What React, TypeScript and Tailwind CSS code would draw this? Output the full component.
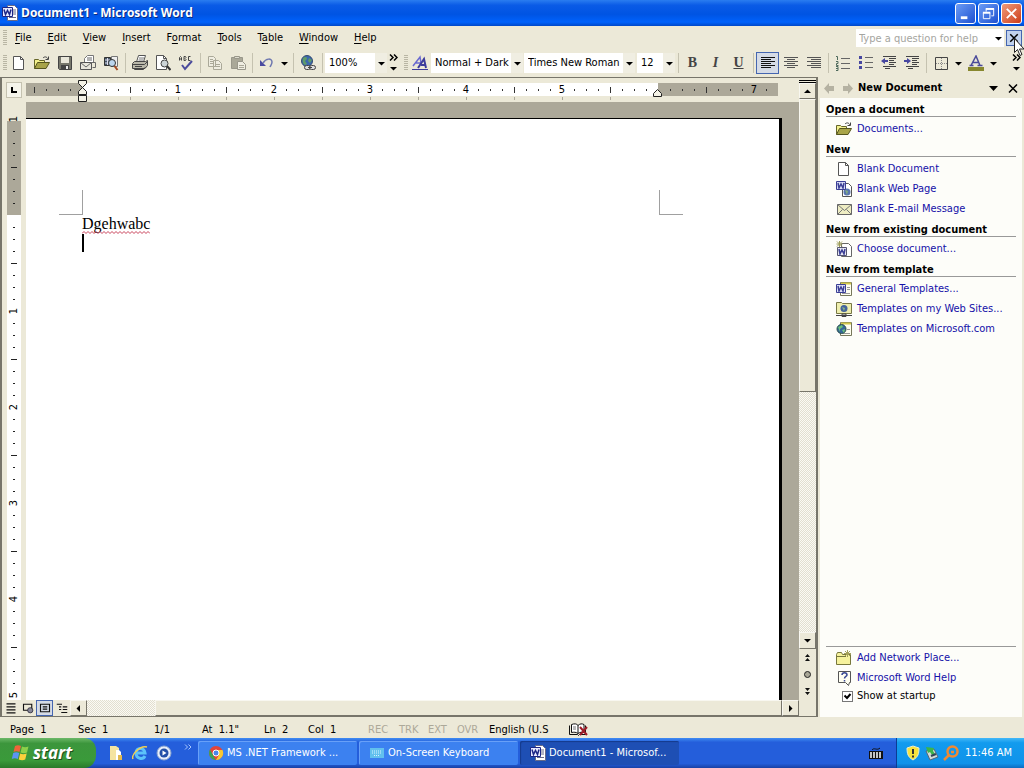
import type { ReactNode } from "react";

/* ================= DATA ================= */

const menus = [
  ["", "F", "ile"],
  ["", "E", "dit"],
  ["", "V", "iew"],
  ["", "I", "nsert"],
  ["F", "o", "rmat"],
  ["", "T", "ools"],
  ["T", "a", "ble"],
  ["", "W", "indow"],
  ["", "H", "elp"]
];

/* ================= ICONS ================= */

const Svg = ({ size = 16, children }: { size?: number; children: ReactNode }) => (
  <svg
    width={size}
    height={size}
    viewBox="0 0 16 16"
    fill="none"
    className="shrink-0"
    aria-hidden="true"
  >
    {children}
  </svg>
);

const SheetIcon = () => (
  <Svg>
    <path d="M2.500 1.500h7l3 3v10h-10z" fill="#fff" stroke="#555" />
    <path d="M9.500 1.500v3h3" stroke="#555" />
  </Svg>
);

const FolderIcon = () => (
  <Svg>
    <path d="M.500 13.500v-9h4l1 1h5v3" fill="#f3f08c" stroke="#66662a" />
    <path d="M.500 13.500l3-6h12l-3.500 6z" fill="#a8a448" stroke="#55551e" />
    <path d="M9 3c2-2 4-1 5 1M14.500 1.500V4.500H11.500" stroke="#444" />
  </Svg>
);

const SaveIcon = () => (
  <Svg>
    <path d="M1.500 1.500h13v13h-12l-1-1z" fill="#77776c" stroke="#444" />
    <path d="M4 2h8v6H4z" fill="#e9e7da" />
    <path d="M4 10h8v4H4z" fill="#444" />
    <path d="M9 11h2v3H9z" fill="#eee" />
  </Svg>
);

const MailIcon = () => (
  <Svg>
    <path d="M4.500 7V3.500l3-3h6v7" fill="#fff" stroke="#777" />
    <path d="M.500 7.500h11v7H.500z" fill="#e8e6dc" stroke="#555" />
    <path d="M.500 7.500L6 12l5.500-4.500M7 3h5M7 5h5M11.500 7.500h4v5h-3" stroke="#666" />
  </Svg>
);

const SearchIcon = () => (
  <Svg>
    <path d="M1.500 2.500h6v8h-6z" fill="#456" stroke="#333" />
    <path d="M2 5h5M2 8h5M4.500 3v7" stroke="#dde" />
    <path d="M8.500 1.500h6v10h-6z" fill="#eee" stroke="#777" />
    <circle cx="9" cy="8" r="3.500" fill="#bcd6ee" stroke="#333" />
    <path d="M11.500 11l3 4" stroke="#a34a22" strokeWidth="2" />
  </Svg>
);

const PrintIcon = () => (
  <Svg>
    <path d="M4.500 7l2-6.500h7l-2 6.500" fill="#fff" stroke="#555" />
    <path d="M7 3h5M6.500 5h5" stroke="#777" />
    <path d="M.500 8.500l2-2h11l2-1v5l-2.500 3H.500z" fill="#b9b7a9" stroke="#444" />
    <path d="M.500 9.500h12l3-3M3 11.500h7M2.500 13.500v1h9l2-2.500" stroke="#444" />
  </Svg>
);

const PreviewIcon = () => (
  <Svg>
    <path d="M1.500.500h7l3 3v11h-10z" fill="#fff" stroke="#555" />
    <path d="M8.500.500v3h3" stroke="#555" />
    <circle cx="9.500" cy="8.500" r="3.500" fill="#ccd4d6" stroke="#444" />
    <path d="M12 11l3.500 4" stroke="#333" strokeWidth="2" />
  </Svg>
);

const SpellIcon = () => (
  <Svg>
    <path
      d="M1.500 5.500V2.500l1-1 1 1v3M1.500 4h2M6 5.500v-4h1.500l.500 1-1 1 1 1-.500 1zM12.500 1.500h-2v4h2"
      stroke="#444"
    />
    <path d="M4 10l3 4 7-8" stroke="#4b4b9c" strokeWidth="2" />
  </Svg>
);

const CopyIcon = () => (
  <Svg>
    <path d="M1.500 1.500h5l2 2v8h-7zM6.500 5.500h5l3 3v6h-8z" fill="#efede1" stroke="#aaa898" />
    <path d="M3 4.500h3M3 6.500h3M3 8.500h3M8 9.500h5M8 11.500h5" stroke="#aaa898" />
  </Svg>
);

const PasteIcon = () => (
  <Svg>
    <path d="M1.500 2.500h11v11h-11z" fill="#aaa898" stroke="#99978a" />
    <path d="M4.500 1.500h5v2h-5z" fill="#dddbce" stroke="#99978a" />
    <path d="M7.500 6.500h5l3 3v5h-8z" fill="#efede1" stroke="#99978a" />
    <path d="M9 10.500h5M9 12.500h5" stroke="#aaa898" />
  </Svg>
);

const UndoIcon = () => (
  <Svg>
    <path d="M1 5v6h6z" fill="#4b4ba0" />
    <path d="M4 8c3-5 9-5 9-1 0 2-1 3-2 5" stroke="#6f78b0" strokeWidth="1.500" />
  </Svg>
);

const LinkIcon = () => (
  <Svg>
    <circle cx="7" cy="6" r="5.500" fill="#3b66ae" stroke="#344b6e" />
    <path d="M3 3c3-2 4-1 4 1L5 6l2 3-2 1C3 9 2 6 3 3zM9 3l3 2-2 3-2-2z" fill="#5f9c68" />
    <rect x="4.500" y="10.500" width="6" height="4" rx="2" fill="#ddd" stroke="#444" />
    <rect x="9.500" y="10.500" width="6" height="4" rx="2" fill="#ddd" stroke="#444" />
    <path d="M8 12.500h4" stroke="#444" />
  </Svg>
);

const StylesIcon = () => (
  <Svg>
    <path d="M1 11L8 2l1.500 9M4 8h5" stroke="#6a6ad0" strokeWidth="1.500" />
    <path d="M6 13l6-9 2 9M9 10h5" stroke="#3c3c9c" strokeWidth="2" />
    <path d="M0 14.500h16" stroke="#3c3c9c" />
  </Svg>
);

const lineSets: Record<string, string> = {
  left: "M1 2.500h14M1 4.500h10M1 6.500h14M1 8.500h10M1 10.500h14M1 12.500h10",
  center: "M1 2.500h14M4 4.500h8M1 6.500h14M4 8.500h8M1 10.500h14M4 12.500h8",
  right: "M1 2.500h14M5 4.500h10M1 6.500h14M5 8.500h10M1 10.500h14M5 12.500h10"
};

const AlignIcon = ({ kind, dark }: { kind: string; dark?: boolean }) => (
  <Svg>
    <path d={lineSets[kind]} stroke={dark ? "#111" : "#555"} />
  </Svg>
);

const NumberIcon = () => (
  <Svg>
    <path d="M6 3.500h9M6 8.500h9M6 13.500h9" stroke="#666" />
    <path
      d="M1 1.500h1.500V5M1 6.500h2v2H1.500v2H3.500M1 11.500h2v4H1M1 13.500h2"
      stroke="#4f6a5c"
    />
  </Svg>
);

const BulletIcon = () => (
  <Svg>
    <path d="M7 2.500h8M7 7.500h8M7 12.500h8" stroke="#666" />
    <path d="M1 1h3v3H1zM1 6h3v3H1zM1 11h3v3H1z" fill="#4747a0" />
  </Svg>
);

const IndentIcon = ({ out }: { out?: boolean }) => (
  <Svg>
    <path
      d="M2 1.500h13M8 3.500h7M8 5.500h5M8 7.500h7M8 9.500h5M2 11.500h13M4 13.500h5"
      stroke="#444"
    />
    {out ? (
      <path d="M0 6l4-3v2h3v2H4v2z" fill="#4747a0" />
    ) : (
      <path d="M7 6L3 3v2H0v2h3v2z" fill="#4747a0" />
    )}
  </Svg>
);

const BorderIcon = () => (
  <Svg>
    <path d="M2.500 2.500h12v12h-12z" stroke="#444" />
    <path d="M8.500 3v11M3 8.500h11" stroke="#888" strokeDasharray="1 1" />
  </Svg>
);

const FontColorIcon = () => (
  <Svg>
    <path
      d="M3 10.500L8 1l4 9.500M5 7.500h6M1.500 10.500h4M9.500 10.500h5"
      stroke="#4a4a9a"
      strokeWidth="1.500"
    />
    <path d="M0 12h16v4H0z" fill="#87872e" />
  </Svg>
);

const WordIcon = () => (
  <Svg>
    <path d="M5.500.500h7l3 3v12h-10z" fill="#fff" stroke="#666a88" />
    <path d="M11 5h3M11 7h3M11 9h3M7 12.500h7" stroke="#666a88" />
    <path d="M.500 2.500h10v9H.500z" fill="#e6e9ff" stroke="#1c2686" />
    <path d="M2 4.500l1.500 5 2-4 2 4 1.500-5" stroke="#1c2686" strokeWidth="1.500" />
  </Svg>
);

const WebPageIcon = () => (
  <Svg>
    <path d="M6.500 2.500h6l3 3v10h-9z" fill="#fff" stroke="#555" />
    <circle cx="11" cy="11" r="3.500" fill="#5874ae" />
    <path d="M9 9l3 1-1 4z" fill="#82ad80" />
    <path d="M.500.500h9v8H.500z" fill="#d8dcf5" stroke="#3b3f95" />
    <path d="M2 2l1 5 2-4 2 4 1-5" stroke="#3b3f95" strokeWidth="1.500" />
  </Svg>
);

const EnvelopeIcon = () => (
  <Svg>
    <path d="M1.500 3.500h14v10h-14z" fill="#eeedc2" stroke="#666" />
    <path d="M1.500 3.500l7 6 7-6M1.500 13.500l5-5M15.500 13.500l-5-5" stroke="#777" />
  </Svg>
);

const ChooseIcon = () => (
  <Svg>
    <path d="M5.500 2.500h7l3 3v10h-10z" fill="#fff" stroke="#666" />
    <path d="M1.500 6.500h9v8h-9z" fill="#e8e8f2" stroke="#555570" />
    <path d="M3 8l1 5 2-4 2 4 1-5" stroke="#3b3f95" strokeWidth="1.500" />
    <path d="M3.500 0v6M.500 3h6M1 .500l5 5M6 .500l-5 5" stroke="#9c9c58" />
  </Svg>
);

const TemplateIcon = () => (
  <Svg>
    <path d="M4.500 1.500h11v13h-11z" fill="#fffff0" stroke="#77775a" />
    <path d="M5 2.500h10" stroke="#d2c94c" strokeWidth="2" />
    <path d="M11 6.500h3M11 8.500h3M6 12.500h8" stroke="#999" />
    <path d="M.500 3.500h9v8H.500z" fill="#dfe2f8" stroke="#3b3f95" />
    <path d="M2 5l1 5 2-4 2 4 1-5" stroke="#3b3f95" strokeWidth="1.500" />
  </Svg>
);

const WebFolderIcon = () => (
  <Svg>
    <path d="M.500 12.500v-11h5l1 1h9v10z" fill="#eeeeae" stroke="#777744" />
    <circle cx="8" cy="7.500" r="3.500" fill="#43639c" />
    <path d="M6 6l3 1-1 3z" fill="#8bb884" />
    <path d="M0 14.500h16M6 13h4v2.500H6z" stroke="#444" />
  </Svg>
);

const GlobeSheetIcon = () => (
  <Svg>
    <path d="M4.500 1.500h11v13h-11z" fill="#fffff0" stroke="#77775a" />
    <path d="M5 2.500h10" stroke="#d2c94c" strokeWidth="2" />
    <path d="M11 8.500h3M7 12.500h7" stroke="#999" />
    <circle cx="5.500" cy="8" r="4.500" fill="#35679a" stroke="#2c5048" />
    <path d="M2 6l4-2 1 2-3 2v3zM6 9l3-1-1 4z" fill="#6cc278" />
  </Svg>
);

const NetworkIcon = () => (
  <Svg>
    <path d="M.500 14.500v-10l1-2h4l1 2h8v10z" fill="#f6f29c" stroke="#77773c" />
    <path d="M1 6.500h9" stroke="#77773c" />
    <path d="M11.500 0v7M8 3.500h7M9 1l5 5M14 1L9 6" stroke="#a5a15a" />
  </Svg>
);

const HelpIcon = () => (
  <Svg>
    <path d="M2.500 1.500h12v11h-1l-1 3-3-3h-7z" fill="#fffff2" stroke="#555" />
    <path
      d="M6 5c0-3 5-3 5 0 0 1.500-2.500 1.500-2.500 3.500M8.500 10v1.500"
      stroke="#3b4a95"
      strokeWidth="1.500"
    />
  </Svg>
);

const Arrow = ({ dir = "down" }: { dir?: string }) => (
  <svg width="7" height="7" viewBox="0 0 7 7" className="shrink-0" aria-hidden="true">
    {dir === "down" && <path d="M0 2h7L3.500 5.500z" fill="#000" />}
    {dir === "up" && <path d="M0 5h7L3.500 1.500z" fill="#000" />}
    {dir === "left" && <path d="M5 0v7L1.500 3.500z" fill="#000" />}
    {dir === "right" && <path d="M2 0v7l3.500-3.500z" fill="#000" />}
  </svg>
);

const FlagIcon = () => (
  <svg width="20" height="18" viewBox="0 0 20 18" className="shrink-0" aria-hidden="true">
    <path d="M4 2c2-1 4-1 6 0L8.500 8C6.500 7 4.500 7 2.500 8z" fill="#f0643a" />
    <path d="M11 2.500c2 1 4 1 6.500 0L16 8.500c-2 1-4 1-6.500 0z" fill="#8cd04a" />
    <path d="M2.200 9c2-1 4-1 6 0L6.800 15c-2-1-4-1-6 0z" fill="#5c94f2" />
    <path d="M9.200 9.500c2 1 4 1 6.500 0L14.200 15.500c-2 1-4 1-6.500 0z" fill="#fbd03c" />
  </svg>
);

/* ================= TOOLBAR PARTS ================= */

const Grip = () => (
  <span className="ml-[3px] h-4 w-1 shrink-0 bg-[repeating-linear-gradient(#b9b6a4_0_1px,transparent_1px_2px)]" />
);

const Sep = () => <span className="mx-[2px] h-5 w-[2px] shrink-0 border-r border-[#c5c2b0]" />;

const Tool = ({
  label,
  active,
  children
}: {
  label: string;
  active?: boolean;
  children: ReactNode;
}) => (
  <button
    type="button"
    aria-label={label}
    className={`flex h-[22px] w-[23px] shrink-0 items-center justify-center ${
      active ? "border border-[#4566b0] bg-[#d5dbe6]" : ""
    }`}
  >
    {children}
  </button>
);

const Drop = ({ label }: { label: string }) => (
  <button
    type="button"
    aria-label={label}
    className="flex h-[22px] w-3 shrink-0 items-center justify-center"
  >
    <Arrow />
  </button>
);

const More = () => (
  <button
    type="button"
    aria-label="Toolbar options"
    className="mr-[2px] flex h-[18px] w-3 shrink-0 flex-col items-center justify-between"
  >
    <svg width="9" height="7" viewBox="0 0 9 7" fill="none" aria-hidden="true">
      <path d="M1 .500l3 3-3 3M5 .500l3 3-3 3" stroke="#000" strokeWidth="1.500" />
    </svg>
    <Arrow />
  </button>
);

const Combo = ({ label, value, width }: { label: string; value: string; width: string }) => (
  <label className={`flex h-5 shrink-0 items-center bg-white ${width}`}>
    <span className="sr-only">{label}</span>
    <select className="h-5 min-w-0 flex-1 appearance-none bg-white pl-1 leading-5 outline-none">
      <option>{value}</option>
    </select>
    <span className="flex h-5 w-3 shrink-0 items-center justify-center bg-[#f0eee2]">
      <Arrow />
    </span>
  </label>
);

/* ================= TITLE, MENU, TOOLBAR ================= */

const captionButton =
  "flex size-[21px] items-center justify-center rounded-[3px] border border-white";

const TitleBar = () => (
  <header className="flex h-[26px] shrink-0 items-center bg-[linear-gradient(#2a7df0,#0a5be6_20%,#0054e3_55%,#0062fc_85%,#0048c8)] pr-[2px] pl-[2px]">
    <WordIcon />
    <h1 className="ml-[3px] flex-1 font-['Open_Sans','Noto_Sans',sans-serif] text-[12px] font-bold text-white [text-shadow:1px_1px_#0a2a80]">
      Document1 - Microsoft Word
    </h1>
    <div className="flex gap-[2px]">
      <button
        type="button"
        aria-label="Minimize"
        className={`${captionButton} bg-linear-to-br from-[#6c9cf5] to-[#1f4fd0]`}
      >
        <Svg size={15}>
          <path d="M3 11h7v3H3z" fill="#fff" />
        </Svg>
      </button>
      <button
        type="button"
        aria-label="Restore"
        className={`${captionButton} bg-linear-to-br from-[#6c9cf5] to-[#1f4fd0]`}
      >
        <Svg size={15}>
          <path d="M5.500 6V3.500h8v7H11" stroke="#fff" />
          <path d="M5 3h9M2 7h8" stroke="#fff" strokeWidth="2" />
          <path d="M2.500 7.500h7v6h-7z" stroke="#fff" />
        </Svg>
      </button>
      <button
        type="button"
        aria-label="Close"
        className={`${captionButton} bg-linear-to-br from-[#f09a78] to-[#cc3a10]`}
      >
        <Svg size={15}>
          <path d="M3 3l10 10M13 3L3 13" stroke="#fff" strokeWidth="2" />
        </Svg>
      </button>
    </div>
  </header>
);

const MenuBar = () => (
  <nav className="flex h-6 shrink-0 items-center">
    <Grip />
    {menus.map(([before, key, after]) => (
      <button type="button" key={before + key + after} className="px-2">
        {before}
        <span className="underline underline-offset-2">{key}</span>
        {after}
      </button>
    ))}
    <div className="ml-auto flex h-[18px] items-center bg-white">
      <input
        aria-label="Type a question for help"
        placeholder="Type a question for help"
        className="h-[18px] w-[136px] pl-[3px] outline-none placeholder:text-[#a5a5a0]"
      />
      <Drop label="Recent questions" />
    </div>
    <div className="relative mr-[2px] ml-[2px]">
      <button
        type="button"
        aria-label="Close Window"
        className="flex size-4 items-center justify-center border border-[#4566b0] bg-[#c1d2ee]"
      >
        <Svg size={12}>
          <path d="M3 3l10 10M13 3L3 13" stroke="#000" strokeWidth="2" />
        </Svg>
      </button>
      {/* mouse pointer */}
      <svg
        width="12"
        height="19"
        viewBox="0 0 12 19"
        className="absolute top-2 left-2 z-10"
        aria-hidden="true"
      >
        <path d="M.500.500v14l3-3 2.500 6 2-1-2.500-5.500h4.500z" fill="#fff" stroke="#222" />
      </svg>
    </div>
  </nav>
);

const Toolbar = () => (
  <div className="flex h-[26px] shrink-0 items-center">
    <Grip />
    <Tool label="New"><SheetIcon /></Tool>
    <Tool label="Open"><FolderIcon /></Tool>
    <Tool label="Save"><SaveIcon /></Tool>
    <Tool label="E-mail"><MailIcon /></Tool>
    <Tool label="Search"><SearchIcon /></Tool>
    <Sep />
    <Tool label="Print"><PrintIcon /></Tool>
    <Tool label="Print Preview"><PreviewIcon /></Tool>
    <Tool label="Spelling"><SpellIcon /></Tool>
    <Sep />
    <Tool label="Copy"><CopyIcon /></Tool>
    <Tool label="Paste"><PasteIcon /></Tool>
    <Sep />
    <Tool label="Undo"><UndoIcon /></Tool>
    <Drop label="Undo list" />
    <Sep />
    <Tool label="Insert Hyperlink"><LinkIcon /></Tool>
    <Sep />
    <Combo label="Zoom" value="100%" width="w-[62px]" />
    <More />
    <Grip />
    <Tool label="Styles and Formatting"><StylesIcon /></Tool>
    <Combo label="Style" value="Normal + Dark" width="mr-px w-[92px]" />
    <Combo label="Font" value="Times New Roman" width="mr-[2px] w-[111px]" />
    <Combo label="Font Size" value="12" width="w-[38px]" />
    <Sep />
    <Tool label="Bold">
      <span className="font-['Liberation_Serif',serif] text-[14px] font-bold text-[#444]">B</span>
    </Tool>
    <Tool label="Italic">
      <span className="font-['Liberation_Serif',serif] text-[14px] font-bold text-[#444] italic">I</span>
    </Tool>
    <Tool label="Underline">
      <span className="font-['Liberation_Serif',serif] text-[14px] font-bold text-[#444] underline">U</span>
    </Tool>
    <Sep />
    <Tool label="Align Left" active><AlignIcon kind="left" dark /></Tool>
    <Tool label="Center"><AlignIcon kind="center" /></Tool>
    <Tool label="Align Right"><AlignIcon kind="right" /></Tool>
    <Sep />
    <Tool label="Numbering"><NumberIcon /></Tool>
    <Tool label="Bullets"><BulletIcon /></Tool>
    <Tool label="Decrease Indent"><IndentIcon out /></Tool>
    <Tool label="Increase Indent"><IndentIcon /></Tool>
    <Sep />
    <Tool label="Borders"><BorderIcon /></Tool>
    <Drop label="Border list" />
    <Tool label="Font Color"><FontColorIcon /></Tool>
    <Drop label="Font color list" />
    <span className="flex-1" />
    <More />
  </div>
);

/* ================= RULERS ================= */

// one cell is an eighth of an inch, "at" counts eighths from the margin
const HCell = ({ at }: { at: number }) => (
  <span className="flex w-3 shrink-0 items-center justify-center">
    {at % 8 === 0 ? (
      <span className="text-[11px] leading-3">{Math.abs(at / 8)}</span>
    ) : (
      <span className={at % 4 === 0 ? "h-[6px] w-px bg-[#333]" : "h-[2px] w-px bg-[#333]"} />
    )}
  </span>
);

const VCell = ({ at }: { at: number }) => (
  <span className="flex h-3 shrink-0 items-center justify-center">
    {at % 8 === 0 ? (
      <span className="-rotate-90 text-[11px] leading-3">{Math.abs(at / 8)}</span>
    ) : (
      <span className={at % 4 === 0 ? "h-px w-[6px] bg-[#222]" : "h-px w-[2px] bg-[#222]"} />
    )}
  </span>
);

const range = (from: number, to: number) =>
  Array.from({ length: to - from + 1 }, (_, i) => from + i);

const HorizontalRuler = () => (
  <div className="flex h-6 shrink-0">
    <div className="flex w-5 items-center justify-center">
      <button
        type="button"
        aria-label="Left tab"
        className="flex size-4 items-center justify-center border border-[#c5c2b0] bg-[#f5f4ea]"
      >
        <svg width="6" height="6" viewBox="0 0 6 6" aria-hidden="true">
          <path d="M0 0h2v4h4v2H0z" fill="#000" />
        </svg>
      </button>
    </div>
    <div className="ml-[2px] min-w-0 flex-1 pt-[5px]">
      <div className="flex h-[13px]">
        <div className="flex w-14 shrink-0 bg-[#aca899] pl-[2px]">
          {range(-4, -1).map((n) => <HCell key={n} at={n} />)}
        </div>
        <div className="relative flex w-[576px] shrink-0 bg-white pl-[6px]">
          {range(1, 47).map((n) => <HCell key={n} at={n} />)}
          {/* indent markers */}
          <svg
            width="9"
            height="22"
            viewBox="0 0 9 22"
            className="absolute -top-[3px] -left-1"
            aria-hidden="true"
          >
            <path
              d="M.500.500h8v3l-4 4-4-4zM.500 14.500v-3l4-4 4 4v3zM.500 15.500h8v6h-8z"
              fill="#f4f2e6"
              stroke="#222"
            />
          </svg>
          <svg
            width="9"
            height="8"
            viewBox="0 0 9 8"
            className="absolute top-[6px] -right-1 z-10"
            aria-hidden="true"
          >
            <path d="M.500 7.500v-3l4-4 4 4v3z" fill="#f4f2e6" stroke="#222" />
          </svg>
        </div>
        <div className="flex w-30 shrink-0 bg-[#aca899] pl-[6px]">
          {range(49, 57).map((n) => <HCell key={n} at={n} />)}
        </div>
      </div>
      {/* default tab stops */}
      <div className="flex gap-[47px] pt-px pl-[104px]">
        {range(1, 11).map((n) => <span key={n} className="h-[3px] w-px bg-[#aca899]" />)}
      </div>
    </div>
  </div>
);

const VerticalRuler = () => (
  <div className="mr-[5px] ml-[3px] flex w-[14px] shrink-0 flex-col overflow-hidden pt-[11px]">
    <VCell at={-8} />
    <div className="-mt-1 flex h-[94px] shrink-0 flex-col bg-[#aca899] pt-1">
      {range(-7, -1).map((n) => <VCell key={n} at={n} />)}
    </div>
    <div className="flex flex-1 flex-col bg-white pt-[6px]">
      {range(1, 40).map((n) => <VCell key={n} at={n} />)}
    </div>
  </div>
);

/* ================= SCROLL BARS ================= */

const hatch = "bg-[repeating-conic-gradient(#e2dfd0_0_25%,#fbfaf4_0_50%)] bg-size-[2px_2px]";
const raised =
  "border border-t-[#f8f7f0] border-l-[#f8f7f0] border-r-[#77756a] border-b-[#77756a] bg-[#ece9d8]";

const VerticalScroll = () => (
  <div className="flex w-[17px] shrink-0 flex-col pt-[2px]">
    <div className="h-[3px] shrink-0 border-y border-black bg-[#ece9d8]" />
    <button
      type="button"
      aria-label="Scroll up"
      className={`flex h-4 shrink-0 items-center justify-center ${raised}`}
    >
      <Arrow dir="up" />
    </button>
    <div className={`flex flex-1 flex-col ${hatch}`}>
      <div className={`h-[55%] ${raised}`} />
    </div>
    <button
      type="button"
      aria-label="Scroll down"
      className={`flex h-[17px] shrink-0 items-center justify-center ${raised}`}
    >
      <Arrow />
    </button>
    <button type="button" aria-label="Previous page" className="flex h-[17px] items-center justify-center">
      <svg width="5" height="7" viewBox="0 0 5 7" aria-hidden="true">
        <path d="M2.500 0L5 3H0zM2.500 4L5 7H0z" fill="#111" />
      </svg>
    </button>
    <button
      type="button"
      aria-label="Select browse object"
      className="flex h-[17px] items-center justify-center"
    >
      <svg width="7" height="7" viewBox="0 0 7 7" aria-hidden="true">
        <circle cx="3.500" cy="3.500" r="3" fill="#a9a797" stroke="#222" />
      </svg>
    </button>
    <button type="button" aria-label="Next page" className="flex h-[17px] items-center justify-center">
      <svg width="5" height="7" viewBox="0 0 5 7" aria-hidden="true">
        <path d="M2.500 3L0 0h5zM2.500 7L0 4h5z" fill="#111" />
      </svg>
    </button>
  </div>
);

const HorizontalScroll = () => (
  <div className="flex h-[17px] shrink-0 items-stretch border-b border-[#77756a]">
    <button type="button" aria-label="Normal View" className="flex w-[17px] items-center justify-center">
      <Svg size={12}>
        <path d="M2 2.500h12M2 6.500h12M2 10.500h12M2 14.500h12" stroke="#111" strokeWidth="1.500" />
      </Svg>
    </button>
    <button type="button" aria-label="Web Layout View" className="flex w-[17px] items-center justify-center">
      <Svg size={12}>
        <path d="M2 3h11v8H2z" stroke="#111" strokeWidth="1.500" />
        <circle cx="11" cy="11" r="3.500" fill="#889" stroke="#223" />
      </Svg>
    </button>
    <button
      type="button"
      aria-label="Print Layout View"
      className="flex w-[17px] items-center justify-center border border-[#4566b0] bg-[#d5dbe6]"
    >
      <Svg size={12}>
        <path d="M2 3h12v10H2zM5 6.500h6M5 9.500h6" stroke="#111" strokeWidth="1.500" />
      </Svg>
    </button>
    <button type="button" aria-label="Outline View" className="flex w-[17px] items-center justify-center">
      <Svg size={12}>
        <path
          d="M1 3h7M4 6.500h3M9 6.500h6M4 10h3M9 10h6M7 14h8"
          stroke="#111"
          strokeWidth="1.500"
        />
      </Svg>
    </button>
    <button
      type="button"
      aria-label="Scroll left"
      className={`flex w-[17px] items-center justify-center ${raised}`}
    >
      <Arrow dir="left" />
    </button>
    <div className={`flex flex-1 ${hatch}`}>
      <div className={`ml-[68px] flex-1 ${raised}`} />
    </div>
    <button
      type="button"
      aria-label="Scroll right"
      className={`mr-[17px] flex w-[17px] items-center justify-center ${raised}`}
    >
      <Arrow dir="right" />
    </button>
  </div>
);

/* ================= DOCUMENT ================= */

const Page = () => (
  <div className="flex min-h-0 min-w-0 flex-1 bg-[#aca899] pt-4 pr-[17px]">
    <div className="flex-1 border-t border-r-3 border-black bg-white pt-[71px]">
      <div className="flex h-[25px] justify-between pr-[96px] pl-[33px]">
        <span className="w-6 border-r border-b border-[#a0a0a0]" />
        <span className="w-6 border-b border-l border-[#a0a0a0]" />
      </div>
      <div className="pl-14 font-['Liberation_Serif',serif] text-[16px] leading-[18px] text-black">
        <p className="flex w-fit flex-col">
          Dgehwabc
          <svg width="68" height="3" viewBox="0 0 68 3" className="-mt-[2px]" aria-hidden="true">
            <path
              d={"M0 2.500" + range(0, 16).map(() => "l2-2l2 2").join("")}
              fill="none"
              stroke="#c8425a"
            />
          </svg>
        </p>
        <div className="h-[18px] w-[2px] bg-black" />
      </div>
    </div>
  </div>
);

const DocumentWindow = () => (
  <main className="flex min-w-0 flex-1 flex-col border-t border-r-2 border-l-2 border-[#77756a]">
    <div className="flex min-h-0 flex-1 pl-[2px]">
      <div className="flex min-w-0 flex-1 flex-col">
        <HorizontalRuler />
        <div className="flex min-h-0 flex-1">
          <VerticalRuler />
          <Page />
        </div>
      </div>
      <VerticalScroll />
    </div>
    <HorizontalScroll />
  </main>
);

/* ================= TASK PANE ================= */

const paneSections = [
  {
    title: "Open a document",
    items: [{ label: "Documents...", icon: <FolderIcon /> }]
  },
  {
    title: "New",
    items: [
      { label: "Blank Document", icon: <SheetIcon /> },
      { label: "Blank Web Page", icon: <WebPageIcon /> },
      { label: "Blank E-mail Message", icon: <EnvelopeIcon /> }
    ]
  },
  {
    title: "New from existing document",
    items: [{ label: "Choose document...", icon: <ChooseIcon /> }]
  },
  {
    title: "New from template",
    items: [
      { label: "General Templates...", icon: <TemplateIcon /> },
      { label: "Templates on my Web Sites...", icon: <WebFolderIcon /> },
      { label: "Templates on Microsoft.com", icon: <GlobeSheetIcon /> }
    ]
  }
];

const PaneLink = ({ label, icon }: { label: string; icon: ReactNode }) => (
  <a href="#" className="flex h-5 items-center gap-[5px] pl-[10px] whitespace-nowrap text-[#1410a8]">
    {icon}
    {label}
  </a>
);

const TaskPane = () => (
  <aside className="ml-[2px] flex w-[204px] shrink-0 flex-col pr-[2px]">
    <div className="flex h-[21px] shrink-0 items-center pt-px pr-1 pl-1">
      <svg width="30" height="11" viewBox="0 0 30 11" aria-hidden="true">
        <path d="M0 5.500L5 0v3h5v5H5v3zM29 5.500L24 0v3h-5v5h5v3z" fill="#b5b2a2" />
      </svg>
      <h2 className="ml-1 flex-1 font-bold">New Document</h2>
      <button type="button" aria-label="Other Task Panes" className="mr-[10px]">
        <svg width="9" height="5" viewBox="0 0 9 5" aria-hidden="true">
          <path d="M0 0h9L4.500 5z" fill="#000" />
        </svg>
      </button>
      <button type="button" aria-label="Close task pane">
        <svg width="10" height="9" viewBox="0 0 10 9" aria-hidden="true">
          <path d="M1 .500l8 8M9 .500l-8 8" stroke="#000" strokeWidth="1.500" />
        </svg>
      </button>
    </div>
    <div className="flex flex-1 flex-col bg-[#fdfdf9] px-[6px] pt-[3px]">
      {paneSections.map((section) => (
        <section key={section.title} className="mb-[2px]">
          <h3 className="mb-[2px] flex h-4 items-end border-b border-[#999] leading-3 font-bold whitespace-nowrap">
            {section.title}
          </h3>
          {section.items.map((item) => (
            <PaneLink key={item.label} label={item.label} icon={item.icon} />
          ))}
        </section>
      ))}
      <div className="mt-auto border-t border-[#999] pt-px pb-[13px]">
        <PaneLink label="Add Network Place..." icon={<NetworkIcon />} />
        <PaneLink label="Microsoft Word Help" icon={<HelpIcon />} />
        <label className="flex h-4 items-center gap-1 pl-4">
          <span className="relative flex">
            <input
              type="checkbox"
              defaultChecked
              className="peer size-[11px] appearance-none border border-[#777] bg-white"
            />
            <svg
              width="11"
              height="11"
              viewBox="0 0 11 11"
              fill="none"
              className="pointer-events-none absolute inset-0 hidden peer-checked:block"
              aria-hidden="true"
            >
              <path d="M2.500 4.500L5 7l3.500-4" stroke="#000" strokeWidth="2" />
            </svg>
          </span>
          Show at startup
        </label>
      </div>
    </div>
  </aside>
);

/* ================= STATUS BAR ================= */

const StatusBar = () => (
  <footer className="flex h-[21px] shrink-0 items-center pt-1 pl-[10px] whitespace-pre">
    <span className="w-[68px]">Page  1</span>
    <span className="w-19">Sec  1</span>
    <span className="w-12">1/1</span>
    <span className="w-[62px]">At  1.1"</span>
    <span className="w-11">Ln  2</span>
    <span className="w-15">Col  1</span>
    <span className="w-[31px] text-[#aca899]">REC</span>
    <span className="w-[29px] text-[#aca899]">TRK</span>
    <span className="w-[29px] text-[#aca899]">EXT</span>
    <span className="w-8 text-[#aca899]">OVR</span>
    <span className="w-[79px]">English (U.S</span>
    <svg width="21" height="14" viewBox="0 0 21 14" fill="none" aria-hidden="true">
      <path d="M1.500 2.500v9h8l1 1 1-1h6v-9" stroke="#111" />
      <path
        d="M3.500 1.500c3-1 5-1 6.500 1v8c-2-1.500-4-1.500-6.500-1zM10 2.500c2-2 4-2 6-1v8c-2-.500-4-.500-6 1"
        fill="#fff"
        stroke="#111"
      />
      <path d="M5 4h3M5 6h3" stroke="#777" />
      <path d="M12 4l7 8M19 4l-7 8" stroke="#a01c28" strokeWidth="2" />
    </svg>
  </footer>
);

/* ================= TASKBAR ================= */

const ChromeIcon = () => (
  <Svg>
    <circle cx="8" cy="8" r="7" fill="#e2453a" />
    <path d="M2 4.500L6 12l2 3A7 7 0 0 1 2 4.500z" fill="#3ba454" />
    <path d="M14.500 5H8l3 5-3 5a7 7 0 0 0 6.500-10z" fill="#f8c832" />
    <circle cx="8" cy="8" r="3" fill="#4a86ea" stroke="#fff" />
  </Svg>
);

const KeyboardIcon = () => (
  <Svg>
    <path d="M1 3h14v10H1z" fill="#62c0ee" />
    <path d="M3 6h10M3 8h10M5 10.500h6" stroke="#d8f4ff" strokeDasharray="1 1" />
  </Svg>
);

const tasks = [
  { label: "MS .NET Framework ...", icon: <ChromeIcon />, active: false },
  { label: "On-Screen Keyboard", icon: <KeyboardIcon />, active: false },
  { label: "Document1 - Microsof...", icon: <WordIcon />, active: true }
];

const Taskbar = () => (
  <div className="flex h-[30px] shrink-0 bg-[linear-gradient(#3f8cf3,#245edb_14%,#245edb_85%,#1941a5)] text-white">
    <button
      type="button"
      className="flex w-24 items-center gap-[2px] rounded-r-xl bg-[linear-gradient(#6cb868,#3c963c_18%,#3a9a3a_75%,#2a7a2a)] pl-[11px] font-['Open_Sans','Noto_Sans',sans-serif] text-[17px] font-bold italic [text-shadow:1px_1px_#1d4f1d]"
    >
      <FlagIcon />
      start
    </button>
    <div className="flex w-[102px] items-center gap-2 pl-3">
      <Svg>
        <path d="M2 1h6l3 2v12H2z" fill="#f4e3a0" />
        <path d="M8 5h3l2 2v8H8z" fill="#fff" />
        <path d="M10 10h4v5h-4z" fill="#e0b850" />
      </Svg>
      <Svg>
        <path d="M13 11c-2 4-9 3-9-3s8-6 9 0H5" stroke="#5cc2fa" strokeWidth="3" />
        <path d="M1 14C-1 10 8 0 15 2" stroke="#f2cf52" strokeWidth="1.500" />
      </Svg>
      <Svg>
        <circle cx="8" cy="8" r="7" fill="#e8eefa" stroke="#8aa4d0" />
        <circle cx="8" cy="8" r="4.500" fill="#2450a8" />
        <path d="M6.500 5.500v5l4-2.500z" fill="#fff" />
      </Svg>
      <svg
        width="8"
        height="6"
        viewBox="0 0 8 6"
        fill="none"
        className="mb-3 ml-1"
        aria-hidden="true"
      >
        <path d="M1 .500L3.500 3 1 5.500M4.500.500L7 3 4.500 5.500" stroke="#a8c8ff" />
      </svg>
    </div>
    <div className="flex items-center gap-[2px]">
      {tasks.map((task) => (
        <button
          type="button"
          key={task.label}
          className={`flex h-6 w-[159px] items-center gap-[3px] rounded-[2px] pl-[10px] whitespace-nowrap ${
            task.active
              ? "bg-[#1e4fb4] shadow-[inset_1px_1px_1px_#143a8c]"
              : "bg-[#3c81f0] shadow-[inset_1px_1px_#68a0f8]"
          }`}
        >
          {task.icon}
          {task.label}
        </button>
      ))}
    </div>
    <div className="mr-[13px] ml-auto flex items-center">
      <svg width="14" height="13" viewBox="0 0 14 13" aria-hidden="true">
        <path d="M3 3c2-3 5 1 8-2" fill="none" stroke="#111" />
        <path d="M0 4h14v8H0z" fill="#111" />
        <path d="M1 6h12M1 8h12M1 10h12" stroke="#fff" strokeWidth="1.500" strokeDasharray="2 1" />
      </svg>
    </div>
    <div className="flex w-32 items-center gap-[3px] border-l border-[#0c3c94] bg-[linear-gradient(#42b8f8,#129bee_16%,#0f92ea_85%,#0c6cc0)] pl-2">
      <Svg>
        <path d="M8 1l6 2c0 6-1 9-6 12C3 12 2 9 2 3z" fill="#f8e23c" stroke="#e8eccc" />
        <path d="M8 4v5M8 10.500v2" stroke="#333" strokeWidth="2" />
      </Svg>
      <Svg>
        <path d="M2 6l8-2 4 8-8 3z" fill="#d5dbd8" stroke="#567" />
        <path d="M2 2l8 1-1 3 2 3-3 1-2-3-2 1z" fill="#3cb44a" />
        <path d="M7 11l5-2" stroke="#345" strokeWidth="2" />
      </Svg>
      <Svg>
        <circle cx="9.500" cy="6.500" r="5" stroke="#f08a32" strokeWidth="2.500" />
        <path d="M6 10l-5 5M8 7h3" stroke="#f08a32" strokeWidth="2.500" />
      </Svg>
      <time className="ml-[3px] whitespace-nowrap">11:46 AM</time>
    </div>
  </div>
);

/* ================= APP ================= */

const App = () => {
  return (
    <div className="flex h-screen flex-col overflow-hidden bg-[#ece9d8] font-['DejaVu_Sans_Condensed','DejaVu_Sans',sans-serif] text-[11px] leading-[14px] text-black">
      <TitleBar />
      <MenuBar />
      <Toolbar />
      <div className="flex min-h-0 flex-1 pt-px">
        <DocumentWindow />
        <TaskPane />
      </div>
      <StatusBar />
      <Taskbar />
    </div>
  );
};

export default App;
